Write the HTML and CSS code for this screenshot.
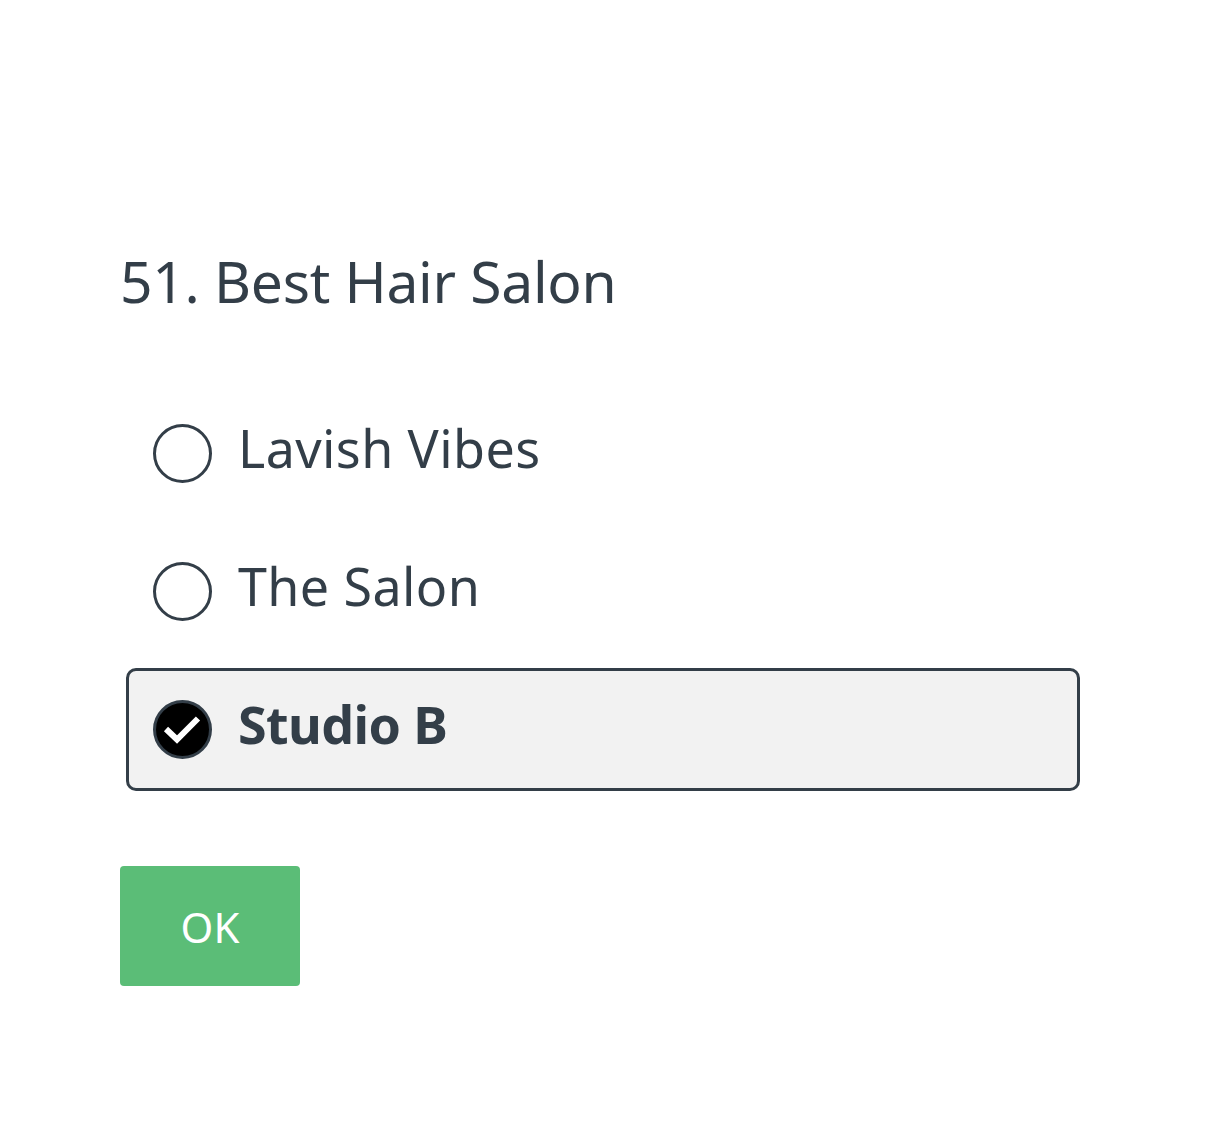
FILE: index.html
```html
<!DOCTYPE html>
<html>
<head>
<meta charset="utf-8">
<link rel="stylesheet" href="styles.css">
</head>
<body>
<main class="question">
  <h1 class="title">51. Best Hair Salon</h1>
  <div class="options">
    <label class="option">
      <span class="radio"></span>
      <span class="label">Lavish Vibes</span>
    </label>
    <label class="option">
      <span class="radio"></span>
      <span class="label">The Salon</span>
    </label>
    <label class="option selected">
      <span class="radio checked">
        <svg viewBox="3 3 53 53" width="53" height="53"><path d="M13 29 L24 39.5 L45 18.5" fill="none" stroke="#fff" stroke-width="6" stroke-linecap="butt" stroke-linejoin="miter"/></svg>
      </span>
      <span class="label">Studio B</span>
    </label>
  </div>
  <button class="ok">OK</button>
</main>
</body>
</html>
```
FILE: styles.css
```css
* { box-sizing: border-box; }
html, body { margin: 0; padding: 0; background: #fff; }
body {
  font-family: "Noto Sans", "Open Sans", sans-serif;
  color: #333e48;
}
.question {
  padding: 236px 0 0 120px;
  width: 1080px;
}
.title {
  margin: 0;
  font-weight: 400;
  font-size: 57px;
  line-height: 90px;
  letter-spacing: -0.3px;
}
.options {
  display: flex;
  flex-direction: column;
  gap: 15px;
  margin-top: 66px;
  margin-left: 6px;
}
.option {
  display: flex;
  align-items: center;
  gap: 26px;
  height: 123px;
  padding: 0 24px;
  border: 3px solid transparent;
  border-radius: 10px;
}
.option.selected {
  background: #f2f2f2;
  border-color: #333e48;
}
.radio {
  width: 59px;
  height: 59px;
  flex: none;
  border: 3px solid #333e48;
  border-radius: 50%;
  display: flex;
  align-items: center;
  justify-content: center;
}
.radio.checked {
  background: #000;
  border-color: #333e48;
}
.radio svg { display: block; }
.label {
  font-size: 52px;
  line-height: 1;
  margin-bottom: 12px;
  letter-spacing: 0.4px;
}
.selected .label {
  font-weight: 700;
  letter-spacing: -0.6px;
}
.ok {
  margin-top: 75px;
  width: 180px;
  height: 120px;
  border: none;
  border-radius: 4px;
  background: #5bbd77;
  color: #fff;
  font-family: "Noto Sans", "Open Sans", sans-serif;
  font-size: 42px;
  padding: 0;
}
```
